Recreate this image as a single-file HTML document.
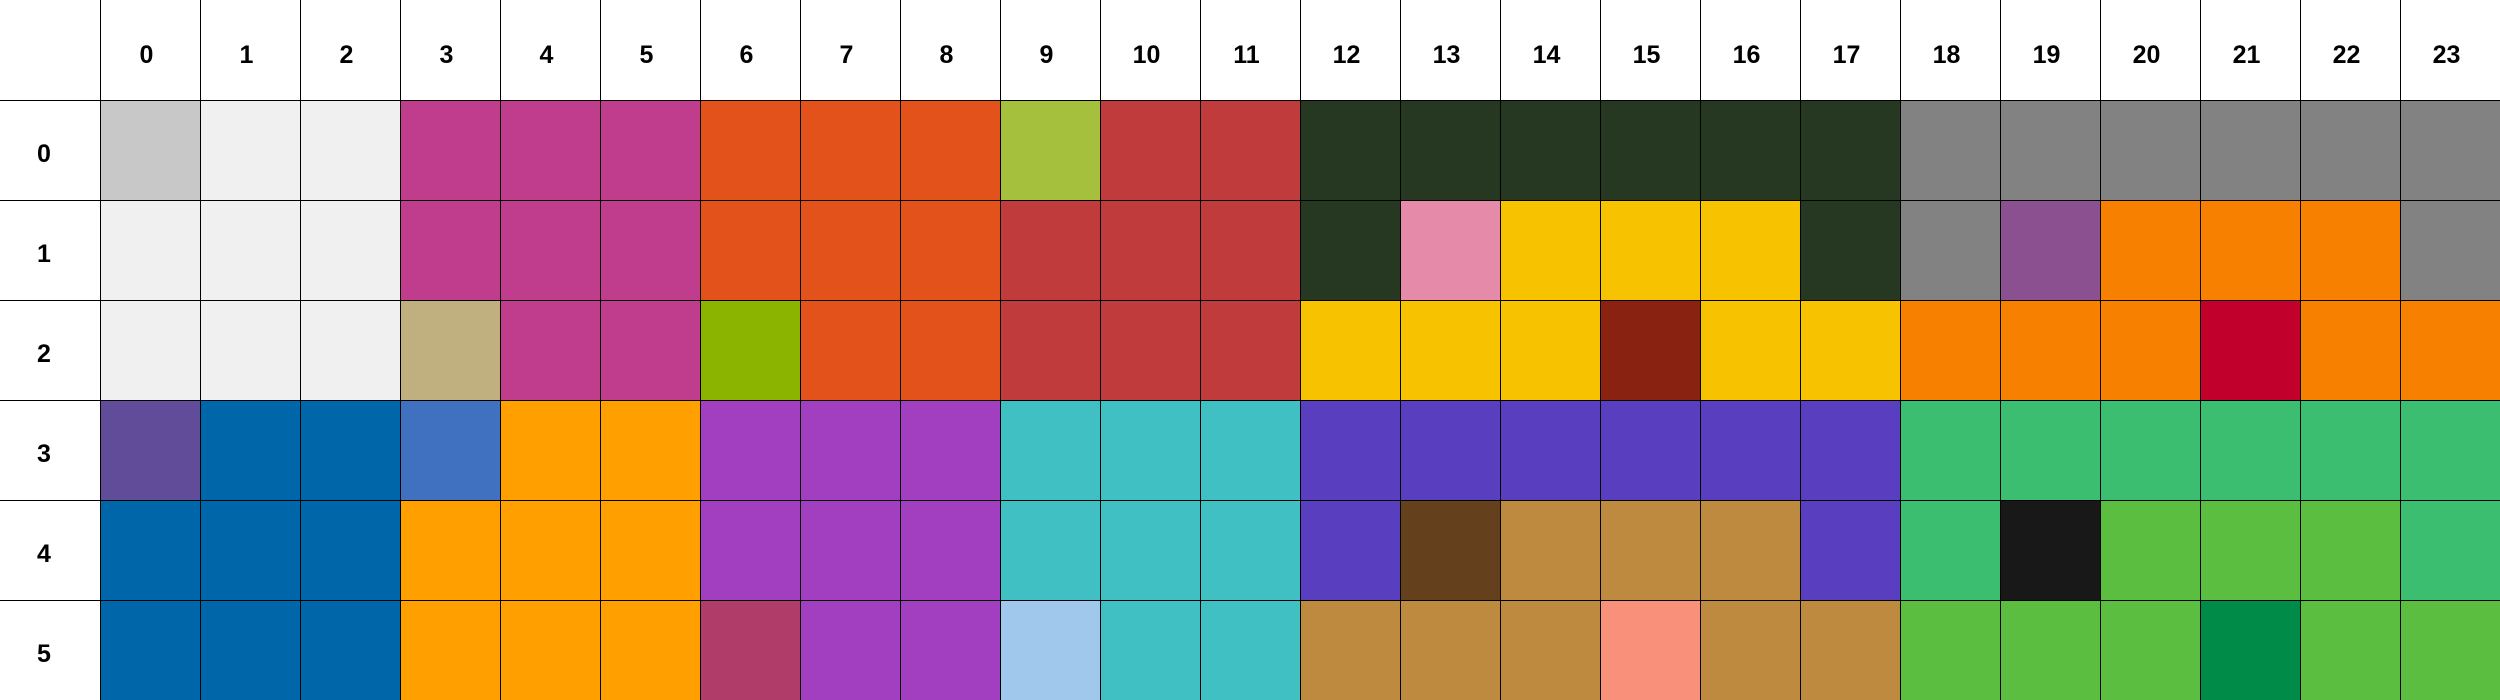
<!DOCTYPE html>
<html><head><meta charset="utf-8"><style>
html,body{margin:0;padding:0;background:#fff;width:2500px;height:700px;overflow:hidden}
.g{display:grid;grid-template-columns:repeat(25,100px);grid-template-rows:repeat(7,100px);width:2500px;height:700px}
.g div{box-sizing:border-box;border-left:1px solid #000;border-top:1px solid #000}
.h{display:flex;align-items:center;justify-content:center;font:600 25px "Liberation Sans","DejaVu Sans",sans-serif;color:#000;background:#fff;padding-right:8px}
.g .t{border-top:none;padding-top:10px}
.g .l{border-left:none;padding-right:12px;padding-top:8px}
.a{background:#c8c8c8}.w{background:#f0f0f0}.m{background:#c03c8c}.o{background:#e4521c}.y{background:#a5c03c}.r{background:#c03c3c}
.d{background:#263822}.k{background:#828282}.p{background:#e68aaa}.Y{background:#f7c200}.v{background:#8a5090}.O{background:#f78000}
.b{background:#c0b080}.G{background:#8ab400}.R{background:#8a2212}.C{background:#c2002c}
.q{background:#604c98}.B{background:#0066aa}.s{background:#4070c0}.F{background:#ffa000}.P{background:#a23ec0}.T{background:#40c0c2}
.i{background:#5a3ec0}.e{background:#3cbe70}.n{background:#64401c}.c{background:#be8a40}.x{background:#181818}.L{background:#5cbe40}
.j{background:#b03c6a}.z{background:#a0c8ec}.S{background:#f8907a}.D{background:#008c48}
</style></head><body><div class="g">
<div class="h t l"></div><div class="h t">0</div><div class="h t">1</div><div class="h t">2</div><div class="h t">3</div><div class="h t">4</div><div class="h t">5</div><div class="h t">6</div><div class="h t">7</div><div class="h t">8</div><div class="h t">9</div><div class="h t">10</div><div class="h t">11</div><div class="h t">12</div><div class="h t">13</div><div class="h t">14</div><div class="h t">15</div><div class="h t">16</div><div class="h t">17</div><div class="h t">18</div><div class="h t">19</div><div class="h t">20</div><div class="h t">21</div><div class="h t">22</div><div class="h t">23</div>
<div class="h l">0</div><div class="a"></div><div class="w"></div><div class="w"></div><div class="m"></div><div class="m"></div><div class="m"></div><div class="o"></div><div class="o"></div><div class="o"></div><div class="y"></div><div class="r"></div><div class="r"></div><div class="d"></div><div class="d"></div><div class="d"></div><div class="d"></div><div class="d"></div><div class="d"></div><div class="k"></div><div class="k"></div><div class="k"></div><div class="k"></div><div class="k"></div><div class="k"></div>
<div class="h l">1</div><div class="w"></div><div class="w"></div><div class="w"></div><div class="m"></div><div class="m"></div><div class="m"></div><div class="o"></div><div class="o"></div><div class="o"></div><div class="r"></div><div class="r"></div><div class="r"></div><div class="d"></div><div class="p"></div><div class="Y"></div><div class="Y"></div><div class="Y"></div><div class="d"></div><div class="k"></div><div class="v"></div><div class="O"></div><div class="O"></div><div class="O"></div><div class="k"></div>
<div class="h l">2</div><div class="w"></div><div class="w"></div><div class="w"></div><div class="b"></div><div class="m"></div><div class="m"></div><div class="G"></div><div class="o"></div><div class="o"></div><div class="r"></div><div class="r"></div><div class="r"></div><div class="Y"></div><div class="Y"></div><div class="Y"></div><div class="R"></div><div class="Y"></div><div class="Y"></div><div class="O"></div><div class="O"></div><div class="O"></div><div class="C"></div><div class="O"></div><div class="O"></div>
<div class="h l">3</div><div class="q"></div><div class="B"></div><div class="B"></div><div class="s"></div><div class="F"></div><div class="F"></div><div class="P"></div><div class="P"></div><div class="P"></div><div class="T"></div><div class="T"></div><div class="T"></div><div class="i"></div><div class="i"></div><div class="i"></div><div class="i"></div><div class="i"></div><div class="i"></div><div class="e"></div><div class="e"></div><div class="e"></div><div class="e"></div><div class="e"></div><div class="e"></div>
<div class="h l">4</div><div class="B"></div><div class="B"></div><div class="B"></div><div class="F"></div><div class="F"></div><div class="F"></div><div class="P"></div><div class="P"></div><div class="P"></div><div class="T"></div><div class="T"></div><div class="T"></div><div class="i"></div><div class="n"></div><div class="c"></div><div class="c"></div><div class="c"></div><div class="i"></div><div class="e"></div><div class="x"></div><div class="L"></div><div class="L"></div><div class="L"></div><div class="e"></div>
<div class="h l">5</div><div class="B"></div><div class="B"></div><div class="B"></div><div class="F"></div><div class="F"></div><div class="F"></div><div class="j"></div><div class="P"></div><div class="P"></div><div class="z"></div><div class="T"></div><div class="T"></div><div class="c"></div><div class="c"></div><div class="c"></div><div class="S"></div><div class="c"></div><div class="c"></div><div class="L"></div><div class="L"></div><div class="L"></div><div class="D"></div><div class="L"></div><div class="L"></div>
</div></body></html>
